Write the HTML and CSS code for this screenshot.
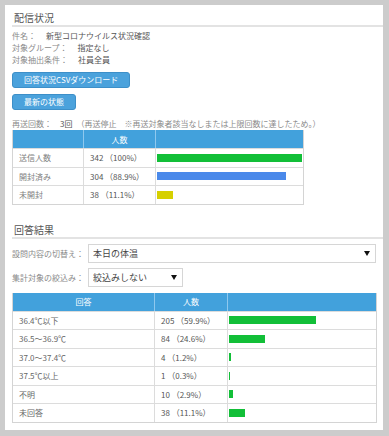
FILE: index.html
```html
<!DOCTYPE html>
<html>
<head>
    <meta charset="utf-8">
    <title>配信状況</title>
    <link rel="stylesheet" href="styles.css">
</head>
<body>
<div class="panel">
    <h2 class="section-title">配信状況</h2>
    <div class="info">
        <div><span class="label">件名：</span><span class="value">新型コロナウイルス状況確認</span></div>
        <div><span class="label">対象グループ：</span><span class="value">指定なし</span></div>
        <div><span class="label">対象抽出条件：</span><span class="value">社員全員</span></div>
    </div>

    <button type="button" class="btn">回答状況CSVダウンロード</button>
    <button type="button" class="btn">最新の状態</button>

    <div class="resend">再送回数：　<span class="count">3回</span>　（再送停止　※再送対象者該当なしまたは上限回数に達したため。）</div>

    <table class="stats stats-send">
        <colgroup><col style="width:70px"><col style="width:72px"><col></colgroup>
        <tr><th></th><th>人数</th><th></th></tr>
        <tr><td class="name">送信人数</td><td class="num">342 （100%）</td><td class="graph"><div class="bar bar-green" style="width:100%"></div></td></tr>
        <tr><td class="name">開封済み</td><td class="num">304 （88.9%）</td><td class="graph"><div class="bar bar-blue" style="width:88.9%"></div></td></tr>
        <tr><td class="name">未開封</td><td class="num">38 （11.1%）</td><td class="graph"><div class="bar bar-yellow" style="width:11.1%"></div></td></tr>
    </table>

    <h2 class="section-title second">回答結果</h2>

    <div class="filter">
        <span class="filter-label">設問内容の切替え：</span>
        <span class="select-wrap wide">
            <select><option>本日の体温</option></select>
        </span>
    </div>
    <div class="filter">
        <span class="filter-label">集計対象の絞込み：</span>
        <span class="select-wrap narrow">
            <select><option>絞込みしない</option></select>
        </span>
    </div>

    <table class="stats stats-answer">
        <colgroup><col style="width:141px"><col style="width:73px"><col></colgroup>
        <tr><th>回答</th><th>人数</th><th></th></tr>
        <tr><td class="name">36.4℃以下</td><td class="num">205 （59.9%）</td><td class="graph"><div class="bar bar-green" style="width:59.9%"></div></td></tr>
        <tr><td class="name">36.5～36.9℃</td><td class="num">84 （24.6%）</td><td class="graph"><div class="bar bar-green" style="width:24.6%"></div></td></tr>
        <tr><td class="name">37.0～37.4℃</td><td class="num">4 （1.2%）</td><td class="graph"><div class="bar bar-green" style="width:1.2%"></div></td></tr>
        <tr><td class="name">37.5℃以上</td><td class="num">1 （0.3%）</td><td class="graph"><div class="bar bar-green" style="width:0.3%"></div></td></tr>
        <tr><td class="name">不明</td><td class="num">10 （2.9%）</td><td class="graph"><div class="bar bar-green" style="width:2.9%"></div></td></tr>
        <tr><td class="name">未回答</td><td class="num">38 （11.1%）</td><td class="graph"><div class="bar bar-green" style="width:11.1%"></div></td></tr>
    </table>
</div>
</body>
</html>
```

FILE: styles.css
```css
body {
    margin: 0;
    padding: 5px 6px 8px 5px;
    background-color: #cccccc;
    font-family: "Noto Sans CJK JP", sans-serif;
    font-size: 8px;
    color: #555;
}

.panel {
    background-color: #fff;
    padding: 6px 6px 7px 7px;
}

.section-title {
    margin: 0 -6px 0 0;
    padding-left: 2px;
    font-size: 10px;
    font-weight: normal;
    line-height: 14px;
    color: #555;
    border-bottom: 2px solid #e3e3e3;
}

.section-title.second {
    margin-top: 18px;
}

.info {
    margin-top: 3px;
    line-height: 12px;
}

.info .label {
    color: #8a8a8a;
    margin-right: 10px;
}

.info .value {
    color: #555;
}

.btn {
    display: block;
    box-sizing: border-box;
    height: 16px;
    margin-top: 6px;
    padding: 0 11px;
    border: 1px solid #3d8fc8;
    border-radius: 3px;
    background-color: #4ba2dc;
    color: #fff;
    font-family: inherit;
    font-size: 8px;
    line-height: 14px;
}

.resend {
    margin-top: 8px;
    line-height: 12px;
    color: #8a8a8a;
}

.resend .count {
    color: #555;
}

.stats {
    table-layout: fixed;
    border-collapse: separate;
    border-spacing: 0;
    border: 1px solid #d4d4d4;
    border-top: 0;
}

.stats-send {
    width: 292px;
}

.stats-answer {
    width: 100%;
    margin-top: 6px;
}

.stats th {
    box-sizing: border-box;
    height: 18px;
    padding: 0;
    background-color: #42a1dc;
    color: #fff;
    font-weight: normal;
    text-align: center;
}

.stats th + th {
    border-left: 1px solid #8fc8ee;
}

.stats td {
    box-sizing: border-box;
    height: 18.5px;
    padding: 0 6px;
    border-top: 1px solid #dcdcdc;
    border-left: 1px solid #dcdcdc;
    white-space: nowrap;
}

.stats td:first-child {
    border-left: 0;
}

.stats td.name {
    color: #808080;
}

.stats-answer td.name {
    color: #666;
}

.stats td.num {
    color: #555;
}

.stats td.graph {
    padding: 0 1px;
}

.bar {
    height: 8px;
}

.bar-green {
    background-color: #12bf38;
}

.bar-blue {
    background-color: #4a89ea;
}

.bar-yellow {
    background-color: #d6d000;
}

.filter {
    display: flex;
    align-items: center;
    margin-top: 5px;
    margin-right: 1px;
}

.filter-label {
    width: 76px;
    color: #8a8a8a;
}

.select-wrap {
    position: relative;
    display: block;
}

.select-wrap.wide {
    flex: 1;
}

.select-wrap.narrow {
    width: 95px;
}

.select-wrap select {
    appearance: none;
    display: block;
    box-sizing: border-box;
    width: 100%;
    height: 19px;
    margin: 0;
    padding: 0 4px;
    border: 1px solid #d6d6d6;
    border-radius: 0;
    background-color: #fff;
    color: #444;
    font-family: inherit;
    font-size: 9px;
}

.select-wrap::after {
    content: "";
    position: absolute;
    right: 6px;
    top: 7px;
    border-left: 3px solid transparent;
    border-right: 3px solid transparent;
    border-top: 5px solid #111;
}
```
